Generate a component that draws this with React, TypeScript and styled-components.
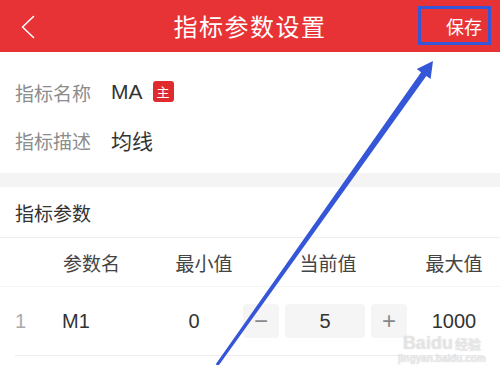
import styled, { createGlobalStyle } from "styled-components"

const colors = {
  red: '#e83336',
  blue: '#3656d8',
  label: '#8c8c8c',
  text: '#333333',
  line: '#eeeeee',
  band: '#f4f4f4',
  box: '#f5f5f5',
}

const GlobalStyle = createGlobalStyle`
  html, body {
    margin:0;
    padding:0;
    background:#fff;
  }
  body {
    font-family:"Liberation Sans","Noto Sans CJK SC",sans-serif;
  }
`

interface Param {
  name:string,
  min:number,
  value:number,
  max:number
}
const params:Param[] = [
  { name:'M1', min:0, value:5, max:1000 }
]

function BackIcon(){
  return <svg width="14" height="24" viewBox="0 0 14 24">
    <polyline points="12.5,1.5 1.5,12 12.5,22.5" fill="none" stroke="#fff" strokeWidth="1.6" strokeLinejoin="round" strokeLinecap="round"/>
  </svg>
}

function Header(){
  return <HeaderView>
    <BackButton><BackIcon/></BackButton>
    <Title>指标参数设置</Title>
    <SaveButton>保存</SaveButton>
  </HeaderView>
}

function InfoSection(){
  return <InfoView>
    <InfoRow>
      <Label>指标名称</Label>
      <Value>MA</Value>
      <Badge>主</Badge>
    </InfoRow>
    <InfoRow>
      <Label>指标描述</Label>
      <Value>均线</Value>
    </InfoRow>
  </InfoView>
}

function ParamTable(){
  return <ParamView>
    <SectionTitle>指标参数</SectionTitle>
    <HeadRow>
      <span/>
      <HeadCell align="left">参数名</HeadCell>
      <HeadCell>最小值</HeadCell>
      <HeadCell>当前值</HeadCell>
      <HeadCell>最大值</HeadCell>
    </HeadRow>
    {
      params.map((item:Param,index:number)=>{
        return <DataRow key={item.name}>
          <IndexCell>{index + 1}</IndexCell>
          <Cell align="left">{item.name}</Cell>
          <Cell shift={-10}>{item.min}</Cell>
          <Stepper>
            <StepButton>−</StepButton>
            <StepValue>{item.value}</StepValue>
            <StepButton>+</StepButton>
          </Stepper>
          <Cell shift={6}>{item.max}</Cell>
        </DataRow>
      })
    }
  </ParamView>
}

function Annotation(){
  return <>
    <HighlightBox/>
    <ArrowLayer width="500" height="365" viewBox="0 0 500 365">
      <polygon
        fill={colors.blue}
        points="433,61 430.6,79 426.3,75.9 218.3,366 215.7,364.3 421.1,72.2 416.8,69.1"
      />
    </ArrowLayer>
    <Watermark>
      <WatermarkBig>Baidu<small>经验</small></WatermarkBig>
      <WatermarkSmall>jingyan.baidu.com</WatermarkSmall>
    </Watermark>
  </>
}

export default function App(){
  return <Page>
    <GlobalStyle/>
    <Header/>
    <InfoSection/>
    <Band/>
    <ParamTable/>
    <Annotation/>
  </Page>
}

const Page = styled.div`
  position:relative;
  width:500px;
  height:365px;
  overflow:hidden;
  background:#fff;
`
const HeaderView = styled.div`
  height:52px;
  background:${colors.red};
  display:grid;
  grid-template-columns:1fr auto 1fr;
  align-items:center;
`
const BackButton = styled.div`
  display:flex;
  align-items:center;
  padding-left:21px;
  padding-top:1px;
`
const Title = styled.div`
  color:#fff;
  font-family:"Noto Sans CJK SC",sans-serif;
  font-size:24px;
  letter-spacing:1.5px;
  line-height:52px;
`
const SaveButton = styled.div`
  justify-self:end;
  padding-right:18px;
  color:#fff;
  font-family:"Noto Sans CJK SC",sans-serif;
  font-size:18px;
  line-height:52px;
`
const InfoView = styled.div`
  padding:16px 0 9px 15px;
`
const InfoRow = styled.div`
  height:48px;
  display:flex;
  align-items:center;
`
const Label = styled.div`
  width:96px;
  color:${colors.label};
  font-family:"Noto Sans CJK SC",sans-serif;
  font-size:19px;
`
const Value = styled.div`
  color:${colors.text};
  font-family:"Liberation Sans","Noto Sans CJK SC",sans-serif;
  font-size:21px;
`
const Badge = styled.div`
  margin-left:10px;
  width:21px;
  height:21px;
  border-radius:3px;
  background:#e02b2e;
  color:#fff;
  font-family:"Noto Sans CJK SC",sans-serif;
  font-size:13px;
  display:flex;
  align-items:center;
  justify-content:center;
  margin-top:-2px;
`
const Band = styled.div`
  height:14px;
  background:${colors.band};
`
const ParamView = styled.div`
  display:flex;
  flex-direction:column;
`
const SectionTitle = styled.div`
  height:50px;
  padding-left:15px;
  display:flex;
  align-items:center;
  color:${colors.text};
  font-family:"Noto Sans CJK SC",sans-serif;
  font-size:19px;
  border-bottom:1px solid ${colors.line};
`
const TableRow = styled.div`
  display:grid;
  grid-template-columns:47px 103px 78px 170px 1fr;
  align-items:center;
`
const HeadRow = styled(TableRow)`
  height:48px;
  padding:0 5px 0 15px;
  border-bottom:1px solid #f4f4f4;
`
const HeadCell = styled.div<{ align?:'left' | 'center' }>`
  text-align:${({align})=>align || 'center'};
  padding-left:${({align})=>align == 'left' ? '1px' : '0'};
  color:#444;
  font-family:"Noto Sans CJK SC",sans-serif;
  font-size:19px;
`
const DataRow = styled(TableRow)`
  height:68px;
  margin:0 17px 0 15px;
  border-bottom:1px solid ${colors.line};
`
const IndexCell = styled.div`
  color:#aaa;
  font-size:20px;
`
const Cell = styled.div<{ align?:'left' | 'center', shift?:number }>`
  text-align:${({align})=>align || 'center'};
  color:${colors.text};
  font-size:20px;
  transform:translateX(${({shift})=>shift || 0}px);
`
const Stepper = styled.div`
  display:flex;
  align-items:center;
  gap:6px;
`
const StepButton = styled.div`
  width:36px;
  height:34px;
  border-radius:4px;
  background:${colors.box};
  color:#888;
  font-size:24px;
  font-weight:300;
  display:flex;
  align-items:center;
  justify-content:center;
`
const StepValue = styled.div`
  width:80px;
  height:34px;
  border-radius:4px;
  background:${colors.box};
  color:${colors.text};
  font-size:20px;
  display:flex;
  align-items:center;
  justify-content:center;
`
const HighlightBox = styled.div`
  position:absolute;
  left:418px;
  top:6px;
  width:67px;
  height:33px;
  border:3px solid ${colors.blue};
  pointer-events:none;
`
const ArrowLayer = styled.svg`
  position:absolute;
  left:0;
  top:0;
  pointer-events:none;
`
const Watermark = styled.div`
  position:absolute;
  left:398px;
  top:334px;
  display:flex;
  flex-direction:column;
  align-items:center;
  pointer-events:none;
  color:rgba(255,255,255,0.55);
  text-shadow:0 0 1px rgba(120,120,120,0.45);
`
const WatermarkBig = styled.div`
  font-family:"Liberation Sans",sans-serif;
  font-size:18px;
  font-weight:bold;
  line-height:18px;
  small{
    font-family:"Noto Sans CJK SC",sans-serif;
    font-size:13px;
    margin-left:2px;
  }
`
const WatermarkSmall = styled.div`
  font-family:"Liberation Sans",sans-serif;
  font-size:10px;
  line-height:12px;
  font-weight:bold;
`
